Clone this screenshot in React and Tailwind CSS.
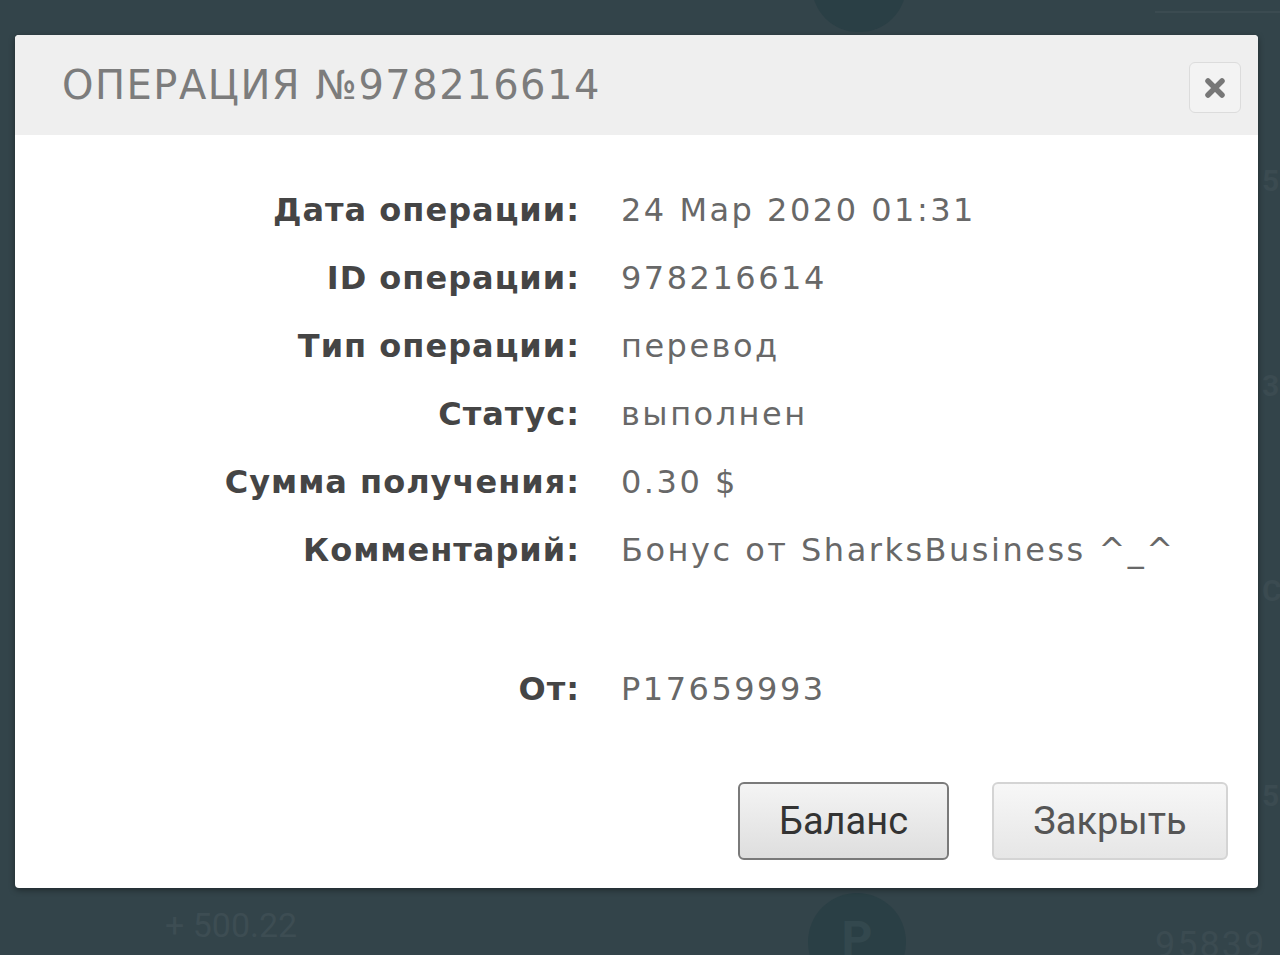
import React from "react";

const rows = [
	["Дата операции:", "24 Мар 2020 01:31"],
	["ID операции:", "978216614"],
	["Тип операции:", "перевод"],
	["Статус:", "выполнен"],
	["Сумма получения:", "0.30 $"],
	["Комментарий:", "Бонус от SharksBusiness ^_^"],
];

const Row = ({ label, value, className = "" }) => (
	<div className={"grid grid-cols-[565px_1fr] gap-x-[41px] h-[68px] items-center " + className}>
		<div className="text-right font-bold text-[#454545] tracking-[1px]">{label}</div>
		<div className="text-[#686868] tracking-[2.5px]">{value}</div>
	</div>
);

const Backdrop = () => (
	<div className="absolute inset-0 pointer-events-none font-['Roboto',sans-serif] text-[#3b4b51]">
		<div className="absolute left-[812px] top-[-60px] w-[94px] h-[92px] rounded-full bg-[#2a3f45]" />
		<div className="absolute left-[1155px] top-[11px] w-[125px] h-[2px] bg-[#3b4b51]" />
		<div className="absolute left-[165px] top-[900px] text-[34px] text-[#3d4d53]">+ 500.22</div>
		<div className="absolute left-[808px] top-[893px] w-[98px] h-[98px] rounded-full bg-[#2a3f45] flex justify-center pt-[10px] text-[48px] font-bold text-[#33484e]">P</div>
		<div className="absolute left-[1155px] top-[918px] text-[36px] tracking-[2px]">95839</div>
		<div className="absolute left-[1262px] top-[158px] flex flex-col gap-[160px] text-[30px] font-bold">
			<span>5</span>
			<span>3</span>
			<span>C</span>
			<span>5</span>
		</div>
	</div>
);

export default function App() {
	return (
		<div className="relative w-[1280px] h-[955px] overflow-hidden bg-[#33444a] font-['DejaVu_Sans',sans-serif]">
			<Backdrop />
			<div className="relative ml-[15px] mt-[35px] w-[1243px] h-[853px] bg-white rounded-[4px] shadow-[0_2px_6px_rgba(0,0,0,0.4)] overflow-hidden flex flex-col">
				<div className="h-[100px] bg-[#efefef] flex items-start justify-between pl-[47px] pr-[17px]">
					<div className="mt-[24px] text-[40px] leading-[52px] tracking-[1.5px] text-[#7c7c7c]">
						ОПЕРАЦИЯ №978216614
					</div>
					<button className="mt-[27px] w-[52px] h-[51px] rounded-[6px] border border-[#dcdcdc] bg-[#f3f3f3] flex items-center justify-center">
						<svg width="24" height="24" viewBox="0 0 24 24">
							<path d="M5 5 L19 19 M19 5 L5 19" stroke="#777" strokeWidth="5.5" strokeLinecap="round" />
						</svg>
					</button>
				</div>
				<div className="pt-[41px] text-[32px]">
					{rows.map(([l, v]) => (
						<Row key={l} label={l} value={v} />
					))}
					<Row label="От:" value="P17659993" className="mt-[71px]" />
				</div>
				<div className="mt-auto mb-[28px] flex justify-end gap-[43px] pr-[30px] font-['Roboto',sans-serif] text-[38px]">
					<button className="w-[211px] h-[78px] rounded-[6px] border-2 border-[#7a7a7a] bg-gradient-to-b from-[#f4f4f4] to-[#dedede] text-[#333]">
						Баланс
					</button>
					<button className="w-[236px] h-[78px] rounded-[6px] border-2 border-[#d4d4d4] bg-gradient-to-b from-[#f7f7f7] to-[#e6e6e6] text-[#555]">
						Закрыть
					</button>
				</div>
			</div>
		</div>
	);
}
